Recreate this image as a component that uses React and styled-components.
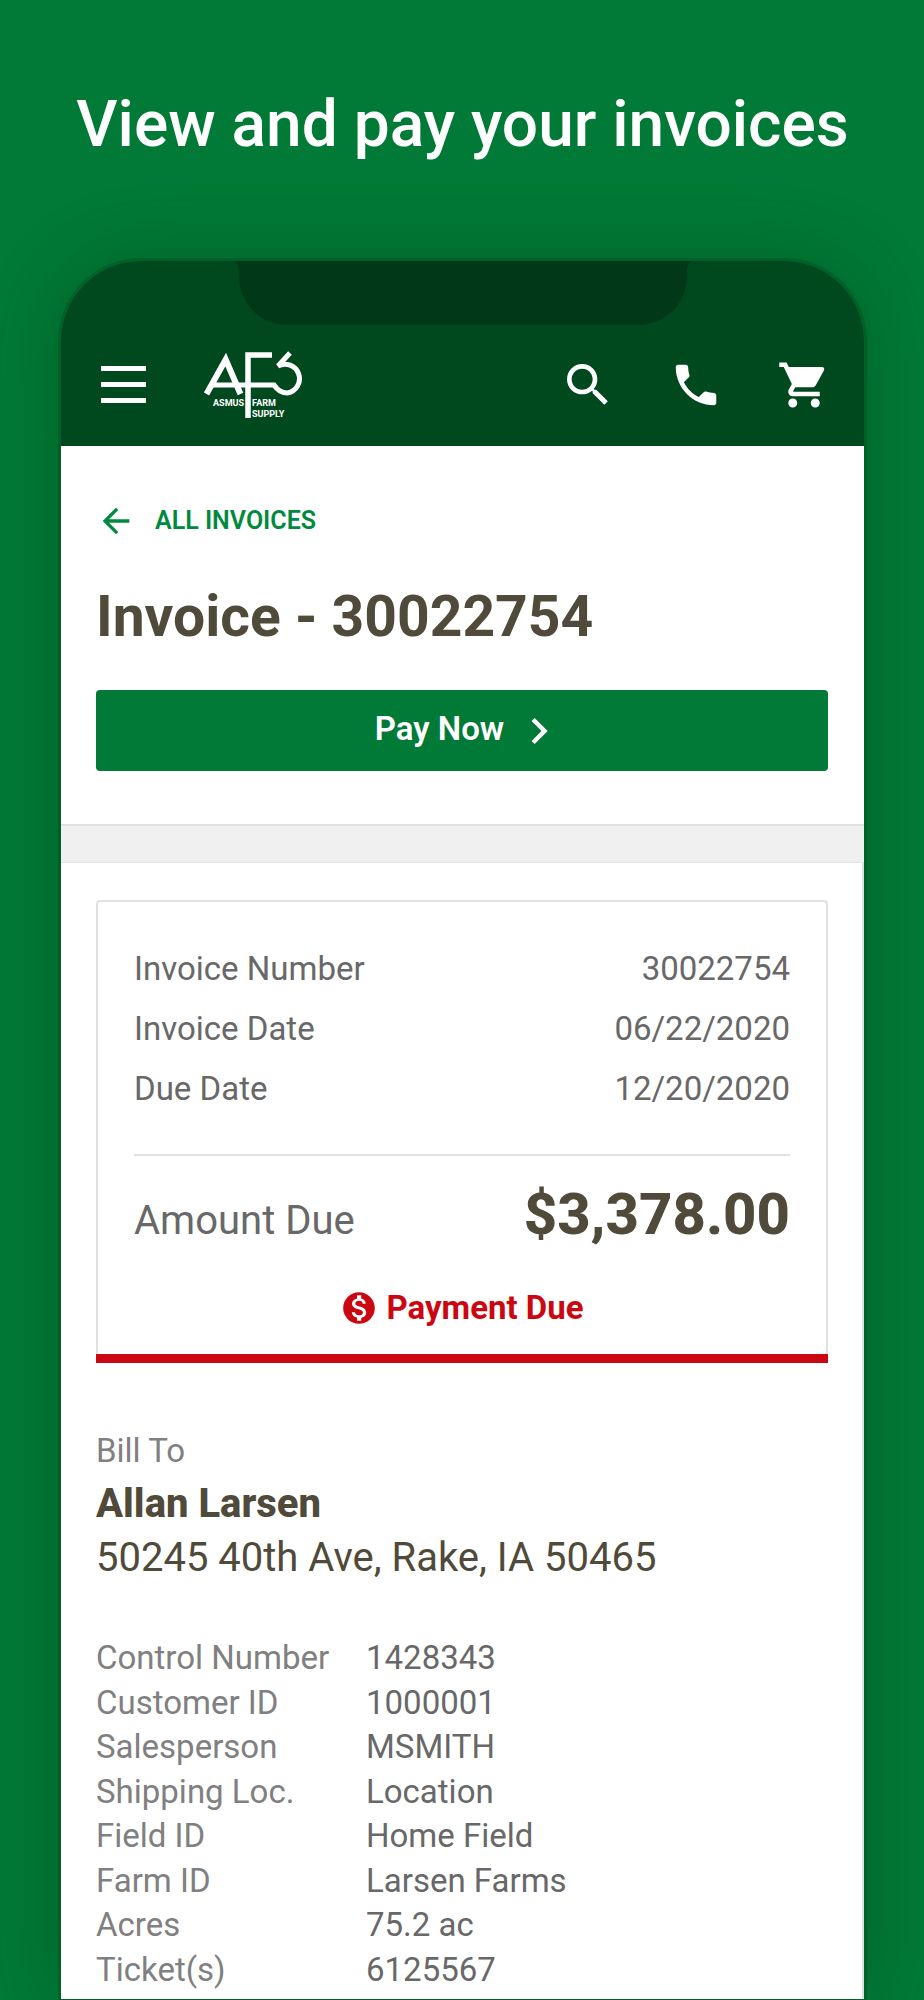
import React from 'react'
import styled, { createGlobalStyle } from 'styled-components'
import {
  MdArrowBack,
  MdChevronRight,
  MdMonetizationOn,
  MdPhone,
  MdSearch,
  MdShoppingCart,
} from 'react-icons/md'

const green = '#007a36'
const darkGreen = '#00481e'
const red = '#cb0812'
const brown = '#4f4a39'
const grey = '#686868'
const lightGrey = '#808080'
const line = '#e1e1e1'

const GlobalStyle = createGlobalStyle`
  *, *::before, *::after {
    box-sizing: border-box;
  }

  body {
    margin: 0;
    background-color: ${green};
    font-family: Roboto, sans-serif;
  }
`

const Page = styled.div`
  display: flex;
  flex-direction: column;
  min-height: 100vh;
  padding: 85px 60px 1px 61px;
  overflow: hidden;
`

const Headline = styled.h2`
  margin: 0 -40px 96px;

  color: white;
  font-size: 64px;
  font-weight: 500;
  line-height: 80px;
  text-align: center;
`

const Phone = styled.main`
  display: flex;
  flex-direction: column;
  flex: 1;

  border-radius: 80px 80px 0 0;
  box-shadow: 0 0 0 3px rgba(0, 72, 30, 0.35), 0 0 70px rgba(0, 60, 20, 0.4);
`

const Header = styled.header`
  position: relative;

  display: flex;
  align-items: center;
  padding: 90px 32px 28px 40px;

  border-radius: 80px 80px 0 0;
  background-color: ${darkGreen};
`

const Notch = styled.svg`
  position: absolute;
  top: 0;
  left: 50%;
  transform: translateX(-50%);

  fill: #003818;
`

const IconButton = styled.button`
  display: flex;
  justify-content: center;
  align-items: center;
  width: ${props => props.$width || 56}px;
  height: 56px;
  padding: 0;

  border: 0;
  background: none;
  color: white;
  cursor: pointer;
`

const LogoLink = styled.a`
  display: block;
  height: 67px;
  margin-left: 58px;
`

const Actions = styled.nav`
  display: flex;
  gap: 52px;
  margin-left: auto;
`

const Summary = styled.section`
  padding: 55px 36px 53px 35px;

  background-color: white;
`

const BackLink = styled.a`
  display: flex;
  align-items: center;
  gap: 19px;

  color: #008a3e;
  font-size: 25px;
  font-weight: 600;
  line-height: 40px;
  text-decoration: none;
`

const Title = styled.h1`
  margin: 40px 0 37px;

  color: ${brown};
  font-size: 57px;
  font-weight: 700;
  line-height: 72px;
`

const PayButton = styled.button`
  display: flex;
  justify-content: center;
  align-items: center;
  gap: 9px;
  width: 100%;
  height: 81px;
  padding: 0 0 0 16px;

  border: 0;
  border-radius: 4px;
  background-color: ${green};
  color: white;
  font-family: inherit;
  font-size: 33px;
  font-weight: 600;
  line-height: 40px;
  cursor: pointer;
`

const PayLabel = styled.span`
  padding-bottom: 4px;
`

const Band = styled.div`
  height: 39px;

  border-top: 2px solid ${line};
  border-bottom: 1px solid ${line};
  background-color: #f0f0f0;
`

const Details = styled.section`
  flex: 1;
  padding: 37px 34px 5px 35px;

  border-right: 2px solid ${line};
  background-color: white;
`

const Card = styled.div`
  border-bottom: 9px solid ${red};
`

const CardBody = styled.div`
  padding: 37px 36px 26px;

  border: 2px solid ${line};
  border-bottom: 0;
  border-radius: 4px 4px 0 0;
`

const List = styled.dl`
  margin: 0;
`

const Row = styled.div`
  display: flex;
  justify-content: space-between;
  align-items: baseline;

  color: ${grey};
  font-size: 33px;
  line-height: 60px;

  dd {
    margin: 0;
  }
`

const TotalRow = styled(Row)`
  margin-top: 35px;
  padding-top: 24px;

  border-top: 2px solid ${line};
  font-size: 40px;
  line-height: 68px;

  dd {
    color: ${brown};
    font-size: 58px;
    font-weight: 800;
  }
`

const Status = styled.p`
  display: flex;
  justify-content: center;
  align-items: center;
  gap: 8px;
  margin: 33px 0 0;

  color: ${red};
  font-size: 33px;
  font-weight: 700;
  line-height: 40px;
`

const BillTo = styled.address`
  margin-top: 68px;

  color: ${brown};
  font-size: 40px;
  font-style: normal;
  line-height: 54px;
`

const BillLabel = styled.div`
  margin-bottom: 6px;

  color: ${lightGrey};
  font-size: 33px;
  line-height: 40px;
`

const Name = styled.div`
  font-weight: 800;
`

const Table = styled.table`
  width: 100%;
  height: 356px;
  margin-top: 51px;

  border-collapse: collapse;
  font-size: 33px;
  line-height: 44px;
  text-align: left;

  th {
    width: 270px;
    padding: 0;
    color: ${lightGrey};
    font-weight: 400;
  }

  td {
    padding: 0;
    color: ${grey};
  }
`

const invoice = [
  ['Invoice Number', '30022754'],
  ['Invoice Date', '06/22/2020'],
  ['Due Date', '12/20/2020'],
]

const fields = [
  ['Control Number', '1428343'],
  ['Customer ID', '1000001'],
  ['Salesperson', 'MSMITH'],
  ['Shipping Loc.', 'Location'],
  ['Field ID', 'Home Field'],
  ['Farm ID', 'Larsen Farms'],
  ['Acres', '75.2 ac'],
  ['Ticket(s)', '6125567'],
]

const MenuIcon = () => (
  <svg width="45" height="37" viewBox="0 0 45 37" fill="currentColor">
    <rect width="45" height="5" />
    <rect y="16" width="45" height="5" />
    <rect y="32" width="45" height="5" />
  </svg>
)

const Logo = () => (
  <svg width="101" height="67" viewBox="0 0 101 67">
    <g fill="none" stroke="white" strokeWidth="5">
      <path d="M2.500 43 21.700 8.500 36.500 43" strokeWidth="6" />
      <path d="M9 34H70C74 40 79 42 83.500 42A14.500 14.500 0 1 0 74 15L86 2" />
      <path d="M44 67V4H68" strokeWidth="5.500" />
    </g>
    <g
      fill="white"
      fontFamily="'Liberation Sans Narrow', Roboto, sans-serif"
      fontSize="9"
      fontWeight="700"
    >
      <text x="40" y="55" textAnchor="end">
        ASMUS
      </text>
      <text x="48" y="55">
        FARM
      </text>
      <text x="48" y="66">
        SUPPLY
      </text>
    </g>
  </svg>
)

const App = () => (
  <>
    <GlobalStyle />
    <Page>
      <Headline>View and pay your invoices</Headline>

      <Phone>
        <Header>
          <Notch width="464" height="64" viewBox="0 0 464 64">
            <path d="M0 0C6 0 8 4 8 10V14C8 44 30 64 58 64H406C434 64 456 44 456 14V10C456 4 458 0 464 0Z" />
          </Notch>
          <IconButton $width={45} aria-label="Menu">
            <MenuIcon />
          </IconButton>
          <LogoLink href="#home" aria-label="Asmus Farm Supply">
            <Logo />
          </LogoLink>
          <Actions>
            <IconButton aria-label="Search">
              <MdSearch size={58} />
            </IconButton>
            <IconButton aria-label="Call">
              <MdPhone size={54} />
            </IconButton>
            <IconButton aria-label="Cart">
              <MdShoppingCart size={54} />
            </IconButton>
          </Actions>
        </Header>

        <Summary>
          <BackLink href="#invoices">
            <MdArrowBack size={40} />
            ALL INVOICES
          </BackLink>
          <Title>Invoice - 30022754</Title>
          <PayButton>
            <PayLabel>Pay Now</PayLabel>
            <MdChevronRight size={52} />
          </PayButton>
        </Summary>

        <Band />

        <Details>
          <Card>
            <CardBody>
              <List>
                {invoice.map(([label, value]) => (
                  <Row key={label}>
                    <dt>{label}</dt>
                    <dd>{value}</dd>
                  </Row>
                ))}
                <TotalRow>
                  <dt>Amount Due</dt>
                  <dd>$3,378.00</dd>
                </TotalRow>
              </List>
              <Status>
                <MdMonetizationOn size={38} />
                Payment Due
              </Status>
            </CardBody>
          </Card>

          <BillTo>
            <BillLabel>Bill To</BillLabel>
            <Name>Allan Larsen</Name>
            50245 40th Ave, Rake, IA 50465
          </BillTo>

          <Table>
            <tbody>
              {fields.map(([label, value]) => (
                <tr key={label}>
                  <th scope="row">{label}</th>
                  <td>{value}</td>
                </tr>
              ))}
            </tbody>
          </Table>
        </Details>
      </Phone>
    </Page>
  </>
)

export default App
